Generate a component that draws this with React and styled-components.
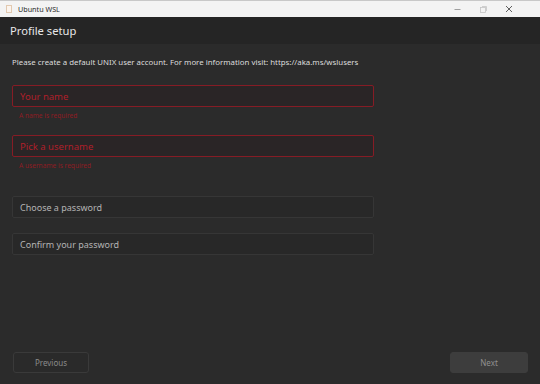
import React from "react";
import styled, { createGlobalStyle } from "styled-components";

const Global = createGlobalStyle`
  html, body { margin: 0; padding: 0; background: #2b2b2b; }
  body { font-family: "Noto Sans", "Open Sans", sans-serif; }
  #root { height: 384px; }
`;

const Window = styled.div`
  width: 540px;
  height: 384px;
  display: flex;
  flex-direction: column;
  background: #2b2b2b;
  overflow: hidden;
`;

const TitleBar = styled.div`
  height: 17px;
  flex: none;
  background: #f3f3f3;
  border-top: 1px solid #c8c8c8;
  box-sizing: border-box;
  display: flex;
  align-items: center;
  padding-left: 6px;
  padding-right: 18px;
`;

const AppIcon = styled.div`
  width: 4px;
  height: 6px;
  border: 1px solid #e2c9b0;
  background: #fbf4ee;
  margin-right: 6px;
`;

const TitleText = styled.span`
  font-size: 7.2px;
  color: #2a2a2a;
  flex: 1;
`;

const Controls = styled.div`
  display: flex;
  height: 100%;
`;

const CtrlBtn = styled.div`
  width: 26px;
  display: flex;
  align-items: center;
  justify-content: center;
`;

const Header = styled.div`
  height: 27px;
  flex: none;
  background: #252525;
  display: flex;
  align-items: center;
  padding-left: 10px;
  font-size: 11.2px;
  color: #e8e8e8;
`;

const Content = styled.div`
  flex: 1;
  display: flex;
  flex-direction: column;
  padding: 12px 12px 11px 12px;
`;

const Intro = styled.div`
  font-size: 7.85px;
  line-height: 12px;
  color: #dcdcdc;
  margin-bottom: 17px;
`;

const Field = styled.div`
  display: flex;
  flex-direction: column;
  margin-bottom: ${(p) => p.$mb}px;
`;

const Input = styled.div`
  width: 362px;
  height: 22px;
  box-sizing: border-box;
  border-radius: 2px;
  display: flex;
  align-items: center;
  padding-left: 7px;
  font-size: ${(p) => (p.$error ? 9.5 : 9)}px;
  border: 1px solid ${(p) => (p.$error ? "#861c25" : "#363636")};
  background: ${(p) => (p.$error ? "#2a2526" : "#282828")};
  color: ${(p) => (p.$error ? "#b01f2a" : "#b4b4b4")};
`;

const ErrorText = styled.div`
  font-size: 6.6px;
  line-height: 10px;
  color: #8e1c23;
  padding-left: 7px;
  margin-top: 4px;
`;

const Spacer = styled.div`
  flex: 1;
`;

const Footer = styled.div`
  display: flex;
  justify-content: space-between;
  align-items: center;
`;

const Button = styled.div`
  height: 21px;
  box-sizing: border-box;
  border-radius: 3px;
  display: flex;
  align-items: center;
  justify-content: center;
  font-size: 8px;
  color: ${(p) => (p.$primary ? "#909090" : "#8a8a8a")};
  background: ${(p) => (p.$primary ? "#3d3d3d" : "#2a2a2a")};
  border: 1px solid ${(p) => (p.$primary ? "#3d3d3d" : "#3a3a3a")};
  width: ${(p) => p.$w}px;
  margin-left: ${(p) => (p.$primary ? 0 : 1)}px;
`;

export default function App() {
  return (
    <>
      <Global />
      <Window>
        <TitleBar>
          <AppIcon />
          <TitleText>Ubuntu WSL</TitleText>
          <Controls>
            <CtrlBtn>
              <svg width="7" height="7" viewBox="0 0 7 7">
                <line x1="0.5" y1="3.5" x2="6.5" y2="3.5" stroke="#8a8a8a" strokeWidth="0.8" />
              </svg>
            </CtrlBtn>
            <CtrlBtn>
              <svg width="7" height="7" viewBox="0 0 7 7">
                <rect x="0.5" y="1.5" width="5" height="5" fill="none" stroke="#c4c4c4" strokeWidth="0.8" />
                <path d="M2 0.5h4.5v4.5" fill="none" stroke="#c4c4c4" strokeWidth="0.8" />
              </svg>
            </CtrlBtn>
            <CtrlBtn>
              <svg width="8" height="8" viewBox="0 0 8 8">
                <path d="M1 1L7 7M7 1L1 7" stroke="#3a3a3a" strokeWidth="0.8" />
              </svg>
            </CtrlBtn>
          </Controls>
        </TitleBar>
        <Header>Profile setup</Header>
        <Content>
          <Intro>
            Please create a default UNIX user account. For more information visit: https://aka.ms/wslusers
          </Intro>
          <Field $mb={14}>
            <Input $error>Your name</Input>
            <ErrorText>A name is required</ErrorText>
          </Field>
          <Field $mb={25}>
            <Input $error>Pick a username</Input>
            <ErrorText>A username is required</ErrorText>
          </Field>
          <Field $mb={15}>
            <Input>Choose a password</Input>
          </Field>
          <Field $mb={0}>
            <Input>Confirm your password</Input>
          </Field>
          <Spacer />
          <Footer>
            <Button $w={76}>Previous</Button>
            <Button $primary $w={78}>Next</Button>
          </Footer>
        </Content>
      </Window>
    </>
  );
}
